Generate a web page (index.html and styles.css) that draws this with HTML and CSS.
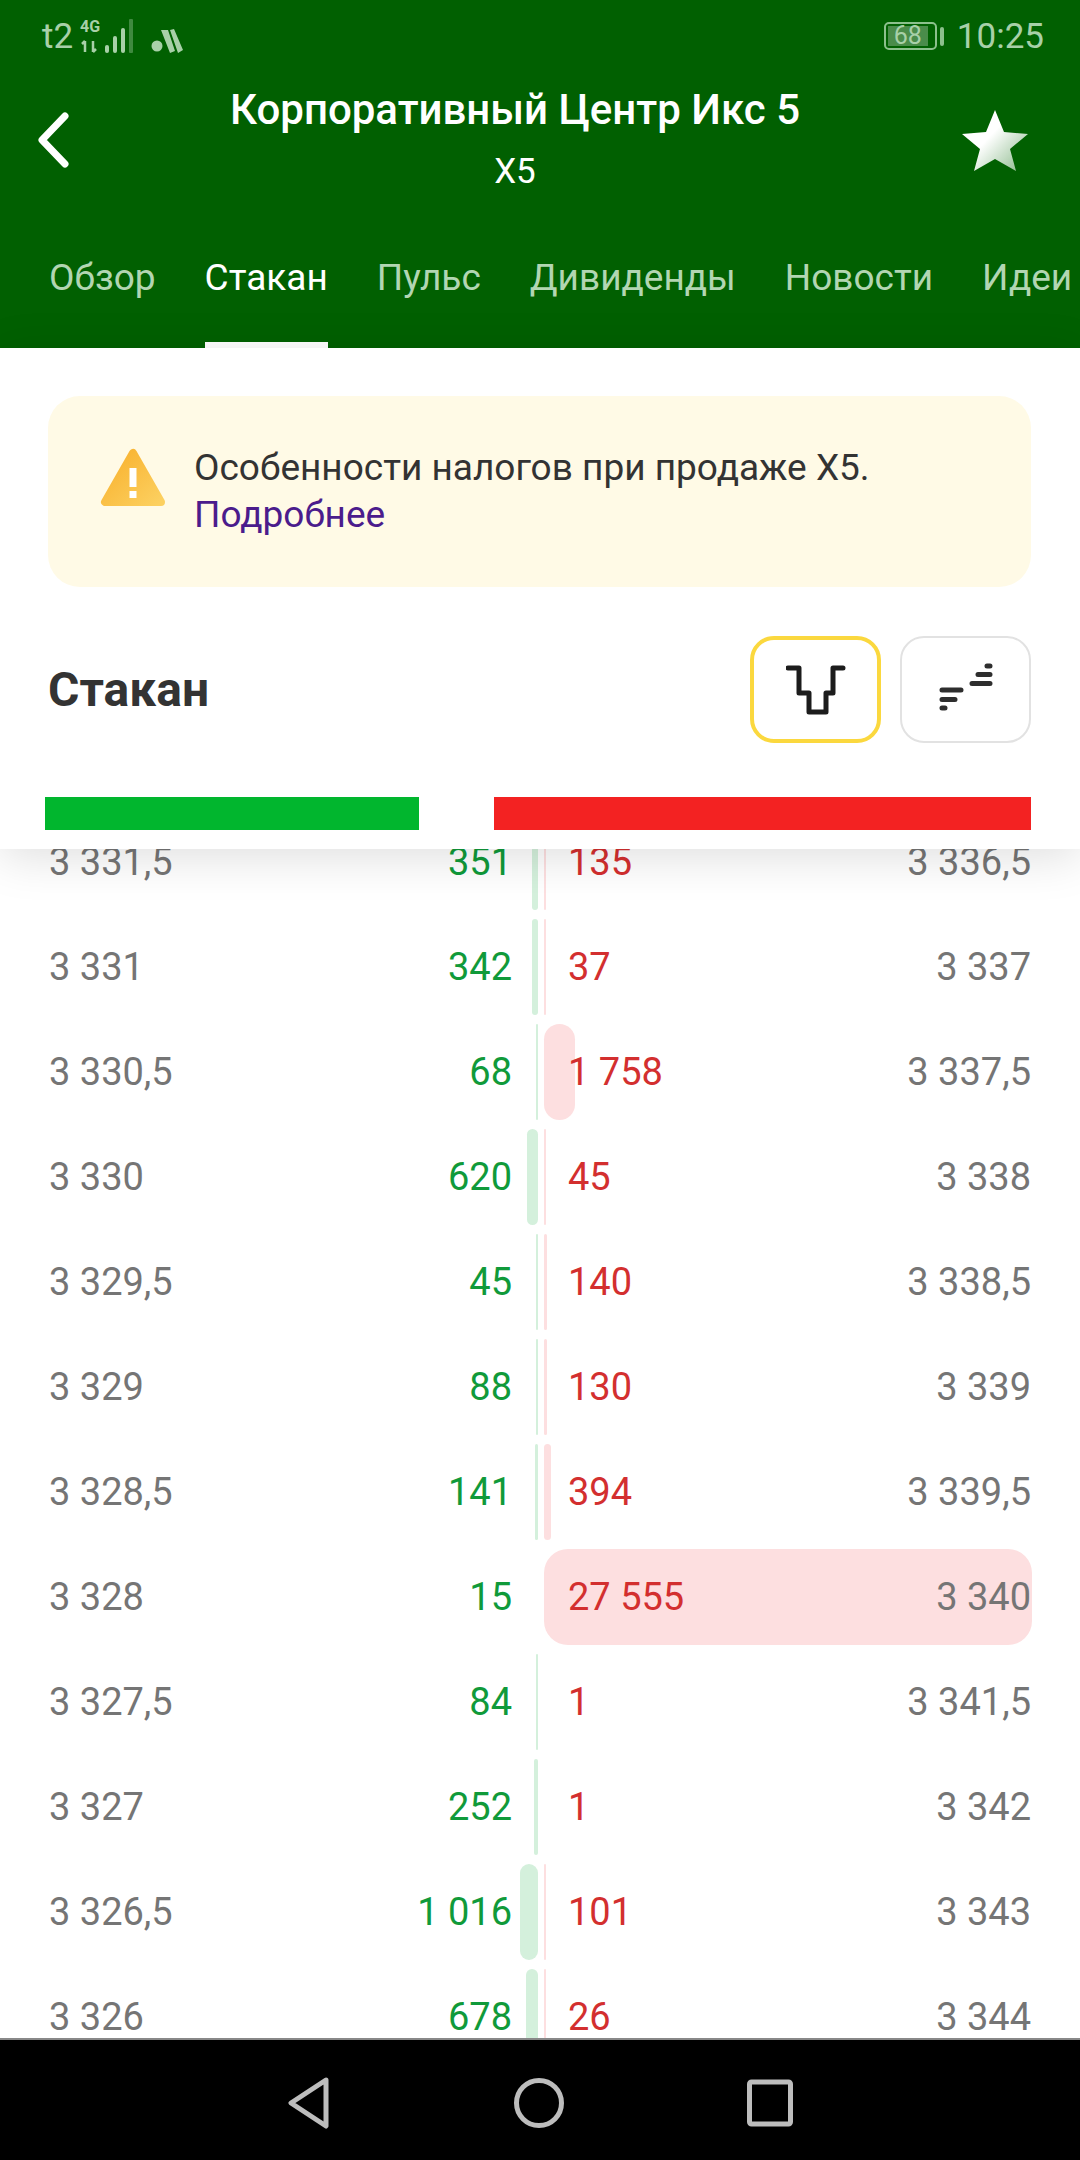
FILE: index.html
```html
<html>
  <head>
    <meta charset="utf-8">
    <link rel="stylesheet" href="styles.css">
    <title>Стакан</title>
  </head>
  <body>
    <div class="phone">
      <div class="top">
        <div class="status">
          <div class="status-left">
            <span class="carrier">t2</span>
            <div class="net">
              <span class="net-label">4G</span>
              <svg width="20" height="13" viewBox="0 0 20 13"><path d="M5 1v11M2 4l3-3M13 1v11M13 12l3-3" fill="none" stroke="#a8d0a8" stroke-width="2.5"/></svg>
            </div>
            <svg class="signal" width="30" height="36" viewBox="0 0 30 36">
              <rect x="0" y="26" width="4" height="8" rx="2" fill="#a8d0a8"/>
              <rect x="8" y="17" width="4" height="17" rx="2" fill="#a8d0a8"/>
              <rect x="16" y="9" width="4" height="25" rx="2" fill="#a8d0a8"/>
              <rect x="24" y="0" width="4" height="34" rx="1" fill="#3f8a3f"/>
            </svg>
            <svg class="app" width="32" height="26" viewBox="0 0 32 26">
              <circle cx="6" cy="18" r="5.5" fill="#a8d0a8"/>
              <path d="M10 2l7 0 7 21-5 2zM19 2l4-1 9 21-5 3z" fill="#a8d0a8"/>
            </svg>
          </div>
          <div class="status-right">
            <div class="battery"><span class="battery-fill">68</span></div>
            <div class="battery-tip"></div>
            <span class="clock">10:25</span>
          </div>
        </div>
        <div class="title-bar">
          <svg class="back" width="34" height="56" viewBox="0 0 34 56"><path d="M29 4L6 28l23 24" fill="none" stroke="#fff" stroke-width="7" stroke-linecap="round" stroke-linejoin="round"/></svg>
          <div class="title-text">
            <div class="title">Корпоративный Центр Икс 5</div>
            <div class="ticker">X5</div>
          </div>
          <svg class="star" width="70" height="64" viewBox="0 0 70 64">
            <defs>
              <linearGradient id="star-fill" x1="0.2" y1="0.2" x2="1" y2="0.9">
                <stop offset="0.3" stop-color="#fff"/>
                <stop offset="1" stop-color="#8fbc8f"/>
              </linearGradient>
            </defs>
            <path d="M35 2l9 22 24 2-18 15 6 22-21-12-21 12 6-22L2 26l24-2z" fill="url(#star-fill)"/>
          </svg>
        </div>
        <div class="tabs">
          <span class="tab">Обзор</span>
          <span class="tab active">Стакан</span>
          <span class="tab">Пульс</span>
          <span class="tab">Дивиденды</span>
          <span class="tab">Новости</span>
          <span class="tab">Идеи</span>
        </div>
      </div>

      <div class="panel">
        <div class="notice">
          <svg class="warn" width="66" height="60" viewBox="0 0 66 60">
            <defs>
              <linearGradient id="warn-fill" x1="0" y1="0" x2="1" y2="1">
                <stop offset="0" stop-color="#f8b02c"/>
                <stop offset="1" stop-color="#fcd060"/>
              </linearGradient>
            </defs>
            <path d="M33 5L5 54h56z" fill="url(#warn-fill)" stroke="url(#warn-fill)" stroke-width="8" stroke-linejoin="round"/>
            <path d="M33 20v19" stroke="#fff" stroke-width="7"/>
            <rect x="29.5" y="43" width="7" height="7" fill="#fff"/>
          </svg>
          <div class="notice-text">Особенности налогов при продаже X5.<br><a class="more">Подробнее</a></div>
        </div>
        <div class="head">
          <div class="head-title">Стакан</div>
          <div class="modes">
            <div class="mode selected">
              <svg width="60" height="52" viewBox="0 0 60 52"><path d="M2 4h11v25h10v19h17V29h7V4h10" fill="none" stroke="#1c1c1c" stroke-width="5" stroke-linecap="round" stroke-linejoin="round"/></svg>
            </div>
            <div class="mode">
              <svg width="60" height="56" viewBox="0 0 60 56"><path d="M51 4h3M42 12.500h12M36 21.500h18M6 28h19M6 37.500h13M6 46h3" fill="none" stroke="#2e2e2e" stroke-width="5" stroke-linecap="round"/></svg>
            </div>
          </div>
        </div>
        <div class="stripes">
          <div class="stripe buy"></div>
          <div class="stripe sell"></div>
        </div>
      </div>

      <div class="book">
        <div class="row">
          <div class="side bid"><i class="bar" style="width:6px"></i><span class="price">3 331,5</span><span class="qty">351</span></div>
          <div class="side ask"><i class="bar" style="width:2px"></i><span class="qty">135</span><span class="price">3 336,5</span></div>
        </div>
        <div class="row">
          <div class="side bid"><i class="bar" style="width:6px"></i><span class="price">3 331</span><span class="qty">342</span></div>
          <div class="side ask"><i class="bar" style="width:2px"></i><span class="qty">37</span><span class="price">3 337</span></div>
        </div>
        <div class="row">
          <div class="side bid"><i class="bar" style="width:2px"></i><span class="price">3 330,5</span><span class="qty">68</span></div>
          <div class="side ask"><i class="bar" style="width:31px"></i><span class="qty">1 758</span><span class="price">3 337,5</span></div>
        </div>
        <div class="row">
          <div class="side bid"><i class="bar" style="width:11px"></i><span class="price">3 330</span><span class="qty">620</span></div>
          <div class="side ask"><i class="bar" style="width:2px"></i><span class="qty">45</span><span class="price">3 338</span></div>
        </div>
        <div class="row">
          <div class="side bid"><i class="bar" style="width:2px"></i><span class="price">3 329,5</span><span class="qty">45</span></div>
          <div class="side ask"><i class="bar" style="width:3px"></i><span class="qty">140</span><span class="price">3 338,5</span></div>
        </div>
        <div class="row">
          <div class="side bid"><i class="bar" style="width:2px"></i><span class="price">3 329</span><span class="qty">88</span></div>
          <div class="side ask"><i class="bar" style="width:3px"></i><span class="qty">130</span><span class="price">3 339</span></div>
        </div>
        <div class="row">
          <div class="side bid"><i class="bar" style="width:3px"></i><span class="price">3 328,5</span><span class="qty">141</span></div>
          <div class="side ask"><i class="bar" style="width:7px"></i><span class="qty">394</span><span class="price">3 339,5</span></div>
        </div>
        <div class="row">
          <div class="side bid"><span class="price">3 328</span><span class="qty">15</span></div>
          <div class="side ask"><i class="bar big" style="width:488px"></i><span class="qty">27 555</span><span class="price">3 340</span></div>
        </div>
        <div class="row">
          <div class="side bid"><i class="bar" style="width:2px"></i><span class="price">3 327,5</span><span class="qty">84</span></div>
          <div class="side ask"><span class="qty">1</span><span class="price">3 341,5</span></div>
        </div>
        <div class="row">
          <div class="side bid"><i class="bar" style="width:4px"></i><span class="price">3 327</span><span class="qty">252</span></div>
          <div class="side ask"><span class="qty">1</span><span class="price">3 342</span></div>
        </div>
        <div class="row">
          <div class="side bid"><i class="bar" style="width:18px"></i><span class="price">3 326,5</span><span class="qty">1 016</span></div>
          <div class="side ask"><i class="bar" style="width:2px"></i><span class="qty">101</span><span class="price">3 343</span></div>
        </div>
        <div class="row">
          <div class="side bid"><i class="bar" style="width:12px"></i><span class="price">3 326</span><span class="qty">678</span></div>
          <div class="side ask"><i class="bar" style="width:2px"></i><span class="qty">26</span><span class="price">3 344</span></div>
        </div>
      </div>

      <div class="nav">
        <svg width="44" height="52" viewBox="0 0 44 52"><path d="M39 3L4 26l35 23z" transform="translate(0 0)" fill="none" stroke="#bdbdbd" stroke-width="5" stroke-linejoin="round"/></svg>
        <svg width="52" height="52" viewBox="0 0 52 52"><circle cx="26" cy="26" r="22.500" fill="none" stroke="#bdbdbd" stroke-width="5"/></svg>
        <svg width="46" height="48" viewBox="0 0 46 48"><rect x="2.500" y="3" width="41" height="42" rx="2" fill="none" stroke="#bdbdbd" stroke-width="5"/></svg>
      </div>
    </div>
  </body>
</html>
```

FILE: styles.css
```css
body {
  margin: 0;
  font-family: Roboto, "Noto Sans", sans-serif;
  background-color: white;
}

.phone {
  width: 1080px;
  height: 2160px;
  display: flex;
  flex-direction: column;
  overflow: hidden;
}

.top {
  height: 348px;
  flex-shrink: 0;
  background-color: #016001;
  color: white;
}

.status {
  height: 72px;
  padding: 0 36px 0 42px;
  display: flex;
  justify-content: space-between;
  align-items: center;
  color: #a8d0a8;
}

.status-left {
  display: flex;
  align-items: center;
}

.carrier {
  font-size: 35px;
  width: 38px;
}

.net {
  width: 25px;
  display: flex;
  flex-direction: column;
  gap: 6px;
}

.net-label {
  font-size: 16px;
  line-height: 14px;
  font-weight: 700;
}

.signal {
  margin-top: 2px;
}

.app {
  margin: 10px 0 0 16px;
}

.status-right {
  display: flex;
  align-items: center;
}

.battery {
  width: 53px;
  height: 28px;
  box-sizing: border-box;
  border: 2px solid #8cc08c;
  border-radius: 5px;
  padding: 2px;
}

.battery-fill {
  display: block;
  width: 40px;
  height: 20px;
  background-color: #4a8c4a;
  font-size: 25px;
  line-height: 20px;
  text-align: center;
}

.battery-tip {
  width: 4px;
  height: 19px;
  margin-left: 3px;
  background-color: #8cc08c;
  border-radius: 2px;
}

.clock {
  margin-left: 13px;
  font-size: 35px;
}

.title-bar {
  height: 136px;
  padding: 0 50px 0 36px;
  display: flex;
  justify-content: space-between;
  align-items: center;
}

.title-text {
  text-align: center;
}

.title {
  font-size: 42px;
  font-weight: 500;
  line-height: 64px;
}

.ticker {
  font-size: 35px;
  line-height: 60px;
}

.tabs {
  display: flex;
  gap: 49px;
  padding-left: 49px;
  white-space: nowrap;
  overflow: hidden;
}

.tab {
  font-size: 37px;
  line-height: 140px;
  height: 140px;
  box-sizing: border-box;
  color: #b2d6b2;
}

.tab.active {
  color: white;
  border-bottom: 6px solid white;
}

.panel {
  position: relative;
  z-index: 2;
  flex-shrink: 0;
  height: 501px;
  box-sizing: border-box;
  padding: 48px 49px 0 48px;
  background-color: white;
  box-shadow: 0 8px 44px rgba(0, 0, 0, 0.13);
}

.notice {
  height: 191px;
  box-sizing: border-box;
  padding: 52px 30px 0 52px;
  display: flex;
  gap: 28px;
  background-color: #fffae6;
  border-radius: 32px;
}

.warn {
  flex-shrink: 0;
}

.notice-text {
  font-size: 37px;
  line-height: 47px;
  color: #333;
  margin-top: -4px;
}

.more {
  color: #4b1c8c;
}

.head {
  margin-top: 49px;
  display: flex;
  justify-content: space-between;
  align-items: center;
}

.head-title {
  font-size: 48px;
  font-weight: 700;
  color: #333;
}

.modes {
  display: flex;
  gap: 19px;
}

.mode {
  width: 131px;
  height: 107px;
  box-sizing: border-box;
  border: 2px solid #e2e2e2;
  border-radius: 24px;
  display: flex;
  justify-content: center;
  align-items: center;
}

.mode.selected {
  border: 4px solid #fbd83e;
}

.stripes {
  margin: 54px 0 0 -3px;
  display: flex;
  justify-content: space-between;
}

.stripe {
  height: 33px;
}

.stripe.buy {
  width: 374px;
  background-color: #01b62e;
}

.stripe.sell {
  width: 537px;
  background-color: #f32222;
}

.book {
  flex: 1;
  margin-top: -35px;
  overflow: hidden;
}

.row {
  height: 96px;
  margin-bottom: 9px;
  padding: 0 49px;
  display: flex;
  gap: 6px;
  font-size: 38px;
}

.side {
  position: relative;
  flex: 1;
  display: flex;
  justify-content: space-between;
  align-items: center;
}

.side.bid {
  padding-right: 26px;
}

.side.ask {
  padding-left: 24px;
  flex-direction: row;
}

.price {
  position: relative;
  color: #757575;
}

.qty {
  position: relative;
}

.bid .qty {
  color: #109a3a;
}

.ask .qty {
  color: #d32f2f;
}

.bar {
  position: absolute;
  top: 0;
  bottom: 0;
  border-radius: 16px;
}

.bid .bar {
  right: 0;
  background-color: #d4f0dc;
}

.ask .bar {
  left: 0;
  background-color: #fddfe0;
}

.bar.big {
  border-radius: 24px;
}

.nav {
  height: 122px;
  flex-shrink: 0;
  box-sizing: border-box;
  border-top: 2px solid #888;
  background-color: black;
  display: flex;
  justify-content: center;
  align-items: center;
  gap: 182px;
  padding-top: 6px;
}
```
